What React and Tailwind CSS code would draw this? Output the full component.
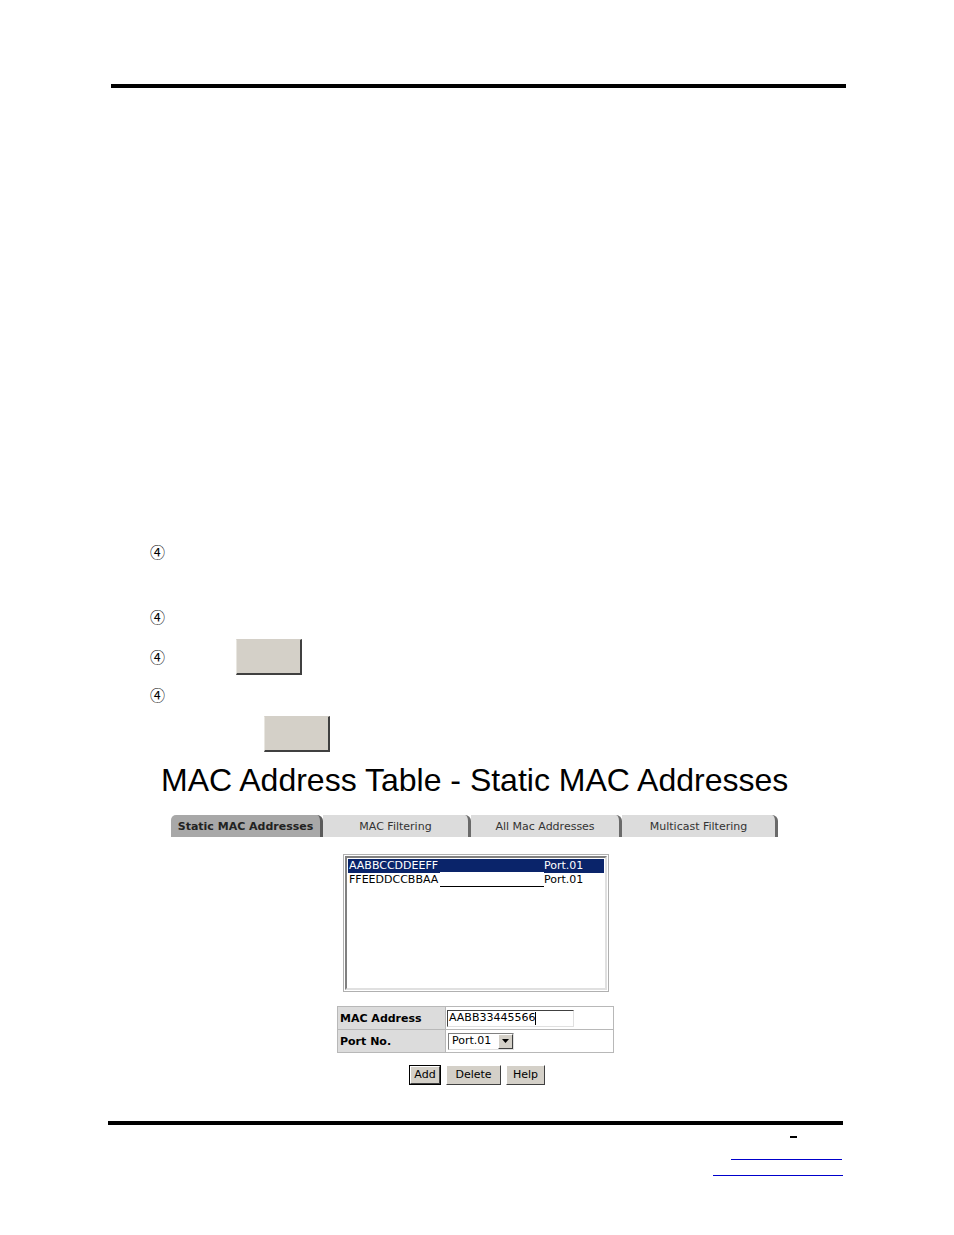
import React from 'react';

const ui = { fontFamily: '"DejaVu Sans", Verdana, sans-serif' };

function StepMark({ className = '' }) {
  return (
    <span
      className={`inline-block w-[16px] text-[15px] leading-[16px] text-black ${className}`}
      style={{ fontFamily: '"Noto Sans CJK JP", "DejaVu Sans", sans-serif' }}
    >
      ④
    </span>
  );
}

function GrayKey({ className = '' }) {
  return (
    <div
      className={`h-[36px] w-[66px] bg-[#d4d0c8] border-t border-l border-t-[#d4d0c8] border-l-[#e8e6e0] border-r-2 border-b-2 border-r-[#404040] border-b-[#404040] ${className}`}
    />
  );
}

function Tab({ label, active, width }) {
  return (
    <div
      className={`relative h-[22px] flex items-center justify-center text-[11px] rounded-tr-[6px] border-r-[3px] ${
        active
          ? 'bg-[#a8a8a8] font-bold text-[#222] rounded-tl-[5px] border-r-[#5a5a5a]'
          : 'bg-[#dcdcdc] text-[#333] border-r-[#6a6a6a]'
      }`}
      style={{ width }}
    >
      <span className="pt-[2px]">{label}</span>
    </div>
  );
}

function WinButton({ children, width, isDefault }) {
  return (
    <div
      className={`h-[20px] ${isDefault ? 'border border-black' : ''}`}
      style={{ width }}
    >
      <div className="h-full w-full bg-[#d4d0c8] border-t border-l border-t-white border-l-white border-r border-b border-r-[#404040] border-b-[#404040] flex items-center justify-center text-[11px] text-black">
        {children}
      </div>
    </div>
  );
}

export default function App() {
  const rows = [
    { mac: 'AABBCCDDEEFF', port: 'Port.01', selected: true },
    { mac: 'FFEEDDCCBBAA', port: 'Port.01', selected: false },
  ];

  return (
    <div
      className="w-[954px] h-[1235px] bg-white overflow-hidden"
      style={{ fontFamily: '"Liberation Sans", Arial, sans-serif' }}
    >
      {/* header rule */}
      <div className="pt-[84px] pl-[111px]">
        <div className="w-[735px] h-[4px] bg-black" />
      </div>

      {/* steps */}
      <div className="pl-[150px]">
        <div className="mt-[456px] h-[16px] flex items-center">
          <StepMark />
        </div>
        <div className="mt-[49px] h-[16px] flex items-center">
          <StepMark />
        </div>
        <div className="mt-[14px] h-[36px] flex items-center">
          <StepMark />
          <GrayKey className="ml-[70px]" />
        </div>
        <div className="mt-[12px] h-[16px] flex items-center">
          <StepMark />
        </div>
        <div className="mt-[13px] h-[36px] flex">
          <GrayKey className="ml-[114px]" />
        </div>
      </div>

      {/* title */}
      <div className="mt-[10px] pl-[161px] h-[36px] text-[32px] leading-[36px] text-black whitespace-nowrap">
        MAC Address Table - Static MAC Addresses
      </div>

      {/* tabs */}
      <div className="mt-[17px] pl-[171px] flex" style={ui}>
        <Tab label="Static MAC Addresses" active width={152} />
        <Tab label="MAC Filtering" width={148} />
        <Tab label="All Mac Addresses" width={151} />
        <Tab label="Multicast Filtering" width={156} />
      </div>

      {/* list box */}
      <div className="mt-[17px] ml-[343px] w-[266px] h-[138px] border border-[#b0b0b0] p-[1px]" style={ui}>
        <div className="h-full w-full border-2 border-t-[#808080] border-l-[#808080] border-r-[#e0e0e0] border-b-[#e0e0e0] pt-[1px] px-[1px]">
          {rows.map((r) => (
            <div
              key={r.mac}
              className={`h-[14px] flex items-end text-[11px] leading-[14px] pl-[1px] ${
                r.selected ? 'bg-[#0a246a] text-white' : 'bg-white text-black'
              }`}
            >
              <span className="w-[91px]">{r.mac}</span>
              <span
                className={`w-[104px] h-[13px] border-b ${
                  r.selected ? 'border-b-white' : 'border-b-black'
                }`}
              />
              <span>{r.port}</span>
            </div>
          ))}
        </div>
      </div>

      {/* form table */}
      <div className="mt-[14px] ml-[337px] w-[277px] border border-[#b8b8b8]" style={ui}>
        <div className="flex h-[23px] border-b border-b-[#b8b8b8]">
          <div className="w-[108px] bg-[#dcdcdc] border-r border-r-[#b8b8b8] flex items-center pl-[2px] pt-[2px] text-[11px] font-bold text-black">
            MAC Address
          </div>
          <div className="flex-1 flex items-center pl-[1px]">
            <div className="w-[127px] h-[17px] border border-t-[#404040] border-l-[#404040] border-r-[#e0e0e0] border-b-[#e0e0e0] bg-white flex items-center text-[11px] text-black pl-[1px]">
              AABB33445566
              <span className="inline-block w-[1px] h-[13px] bg-black" />
            </div>
          </div>
        </div>
        <div className="flex h-[22px]">
          <div className="w-[108px] bg-[#dcdcdc] border-r border-r-[#b8b8b8] flex items-center pl-[2px] pt-[2px] text-[11px] font-bold text-black">
            Port No.
          </div>
          <div className="flex-1 flex items-center pl-[2px]">
            <div className="w-[66px] h-[17px] border border-t-[#808080] border-l-[#808080] border-r-[#e0e0e0] border-b-[#e0e0e0] bg-white flex items-center">
              <span className="flex-1 text-[11px] text-black pl-[3px]">Port.01</span>
              <span className="w-[15px] h-[15px] bg-[#d4d0c8] border border-t-white border-l-white border-r-[#404040] border-b-[#404040] flex items-center justify-center">
                <svg width="7" height="4" viewBox="0 0 7 4">
                  <path d="M0 0 H7 L3.5 4 Z" fill="#000" />
                </svg>
              </span>
            </div>
          </div>
        </div>
      </div>

      {/* buttons */}
      <div className="mt-[12px] ml-[409px] flex gap-[5px]" style={ui}>
        <WinButton width={32} isDefault>
          Add
        </WinButton>
        <WinButton width={55}>Delete</WinButton>
        <WinButton width={39}>Help</WinButton>
      </div>

      {/* footer */}
      <div className="mt-[36px] ml-[108px] w-[735px] h-[4px] bg-black" />
      <div className="mt-[11px] ml-[790px] w-[7px] h-[2px] bg-black" />
      <div className="mt-[21px] ml-[731px] w-[111px] h-[1px] bg-[#0000cc]" />
      <div className="mt-[15px] ml-[713px] w-[130px] h-[1px] bg-[#0000cc]" />
    </div>
  );
}
